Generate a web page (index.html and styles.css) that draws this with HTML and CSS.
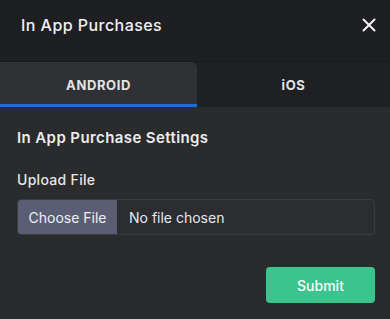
FILE: index.html
```html
<!DOCTYPE html>
<html>
<head>
<meta charset="utf-8">
<link rel="stylesheet" href="styles.css">
</head>
<body>
<div class="modal">
  <div class="header">
    <div class="title">In App Purchases</div>
    <svg class="close" width="14" height="14" viewBox="0 0 14 14"><path d="M1.5 1.5L12.5 12.5M12.5 1.5L1.5 12.5" stroke="#f2f2f2" stroke-width="2" stroke-linecap="round"/></svg>
  </div>
  <div class="tabs">
    <div class="tab active">ANDROID</div>
    <div class="tab">iOS</div>
  </div>
  <div class="body">
    <div class="section-title">In App Purchase Settings</div>
    <div class="label">Upload File</div>
    <div class="file">
      <div class="file-btn">Choose File</div>
      <div class="file-name">No file chosen</div>
    </div>
    <div class="actions">
      <div class="submit">Submit</div>
    </div>
  </div>
</div>
</body>
</html>
```
FILE: styles.css
```css
html, body {
  margin: 0;
  padding: 0;
  background: #2a2b2d;
  font-family: Inter, "Noto Sans", sans-serif;
  color: #ececec;
}
.modal {
  width: 390px;
  height: 319px;
  display: flex;
  flex-direction: column;
  background: #2a2b2d;
}
.header {
  height: 62px;
  background: #1e1f22;
  display: flex;
  align-items: center;
  justify-content: space-between;
  padding: 0 14px 12px 21px;
  box-sizing: border-box;
  border-bottom: 1px solid #18191b;
}
.title {
  font-size: 16px;
  font-weight: 500;
  color: #f0f0f0;
  letter-spacing: 0.45px;
}
.close {
  display: block;
}
.tabs {
  display: flex;
  height: 45px;
  background: #1f2023;
}
.tab {
  flex: 1;
  display: flex;
  align-items: center;
  justify-content: center;
  font-size: 13px;
  font-weight: 700;
  color: #e4e4e4;
  letter-spacing: 0.6px;
  padding-top: 1px;
  box-sizing: border-box;
}
.tab.active {
  flex: 0 0 197px;
  background: #303134;
  border-top-right-radius: 6px;
  border-bottom: 3px solid #1a6fd6;
  padding-top: 3px;
}
.body {
  flex: 1;
  padding: 21px 15px 0 17px;
  box-sizing: border-box;
}
.section-title {
  font-size: 15px;
  font-weight: 600;
  color: #ececec;
  line-height: 20px;
  letter-spacing: 0.4px;
}
.label {
  margin-top: 22px;
  font-size: 14px;
  font-weight: 500;
  color: #e6e6e6;
  line-height: 20px;
  letter-spacing: 0.3px;
}
.file {
  margin-top: 9px;
  height: 36px;
  display: flex;
  border: 1px solid #3a3c43;
  border-radius: 4px;
  overflow: hidden;
  box-sizing: border-box;
  background: #2c2d30;
}
.file-btn {
  width: 99px;
  background: #5a5d73;
  display: flex;
  align-items: center;
  justify-content: center;
  font-size: 14px;
  color: #f0f0f0;
}
.file-name {
  display: flex;
  align-items: center;
  padding-left: 12px;
  font-size: 14px;
  color: #e8e8e8;
}
.actions {
  display: flex;
  justify-content: flex-end;
  margin-top: 32px;
}
.submit {
  width: 109px;
  height: 36px;
  background: #3cc48f;
  border-radius: 4px;
  display: flex;
  align-items: center;
  justify-content: center;
  font-size: 14px;
  font-weight: 500;
  color: #f4fff9;
}
```
